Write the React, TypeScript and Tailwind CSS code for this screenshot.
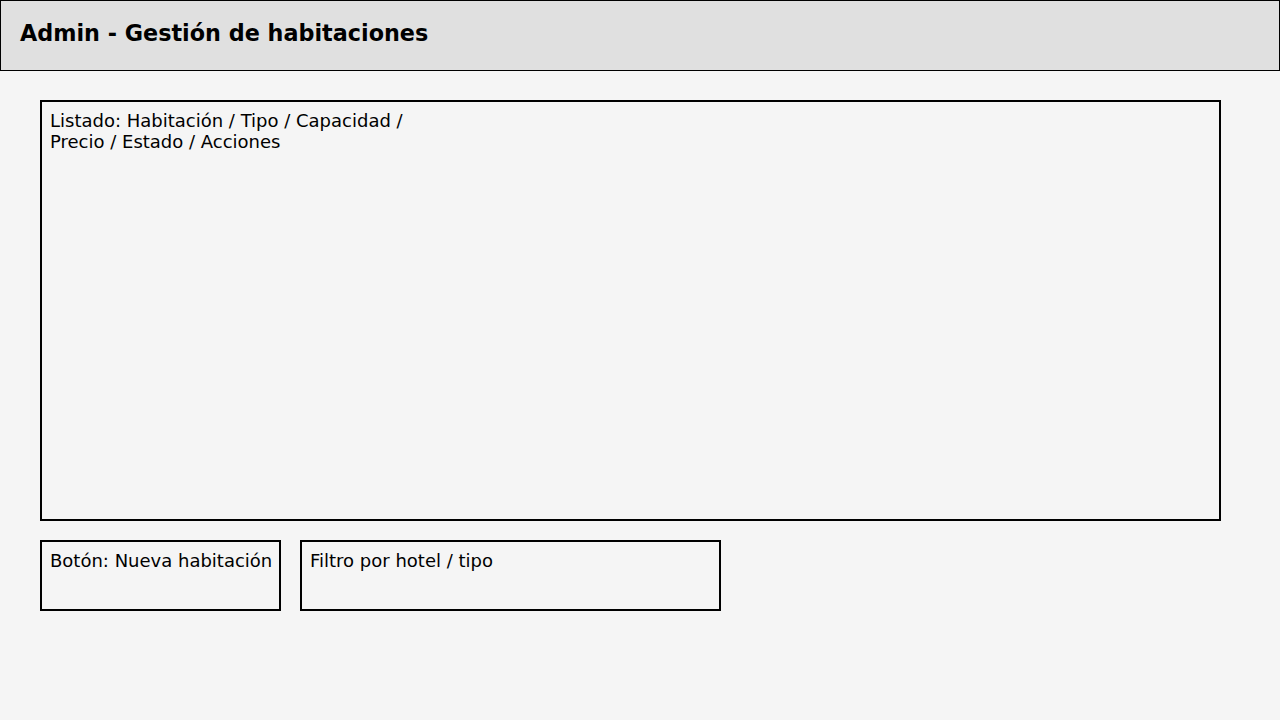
export default function App() {
  return (
    <div
      className="min-h-[720px] w-full bg-[#f5f5f5] text-black"
      style={{ fontFamily: '"DejaVu Sans", sans-serif' }}
    >
      <header className="flex h-[71px] items-center border border-black bg-[#e0e0e0] px-[19px] pb-[4px]">
        <h1 className="text-[22.3px] font-bold leading-none">
          Admin - Gestión de habitaciones
        </h1>
      </header>

      <main className="flex flex-col gap-[19px] px-10 pt-[29px]">
        <section className="h-[421px] w-[1181px] border-2 border-black px-2 py-[8px]">
          <p className="max-w-[380px] text-[18px] leading-[21px]">
            Listado: Habitación / Tipo / Capacidad / Precio / Estado / Acciones
          </p>
        </section>

        <div className="flex gap-[19px]">
          <div className="h-[71px] w-[241px] border-2 border-black py-[8px] pl-2">
            <p className="whitespace-nowrap text-[18px] leading-[21px]">
              Botón: Nueva habitación
            </p>
          </div>
          <div className="h-[71px] w-[421px] border-2 border-black px-2 py-[8px]">
            <p className="text-[18px] leading-[21px]">Filtro por hotel / tipo</p>
          </div>
        </div>
      </main>
    </div>
  );
}
